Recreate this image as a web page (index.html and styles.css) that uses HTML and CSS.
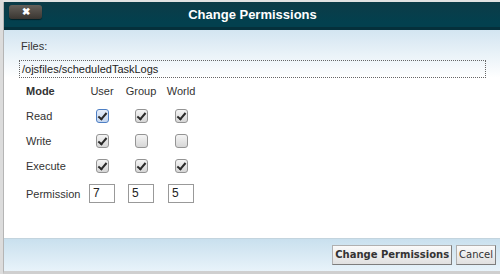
FILE: index.html
```html
<!DOCTYPE html>
<html lang="en">
<head>
  <meta charset="UTF-8">
  <title>Change Permissions</title>
  <link rel="stylesheet" href="styles.css">
</head>
<body>

<div class="page-edge"></div>

<!-- Dialog -->
<div class="dialog">
  <div class="titlebar">
    <span class="close-btn">&#10006;</span>
    <h1>Change Permissions</h1>
  </div>

  <div class="dialog-body">
    <div class="label">Files:</div>
    <div class="path-field">/ojsfiles/scheduledTaskLogs</div>

    <div class="perm-grid">
      <div class="head mode">Mode</div>
      <div class="head">User</div>
      <div class="head">Group</div>
      <div class="head">World</div>

      <div class="row-label">Read</div>
      <div class="cell"><span class="cb checked focus"></span></div>
      <div class="cell"><span class="cb checked"></span></div>
      <div class="cell"><span class="cb checked"></span></div>

      <div class="row-label">Write</div>
      <div class="cell"><span class="cb checked"></span></div>
      <div class="cell"><span class="cb"></span></div>
      <div class="cell"><span class="cb"></span></div>

      <div class="row-label">Execute</div>
      <div class="cell"><span class="cb checked"></span></div>
      <div class="cell"><span class="cb checked"></span></div>
      <div class="cell"><span class="cb checked"></span></div>

      <div class="row-label perm">Permission</div>
      <div class="cell perm"><span class="num">7</span></div>
      <div class="cell perm"><span class="num">5</span></div>
      <div class="cell perm"><span class="num">5</span></div>
    </div>
  </div>

  <div class="dialog-footer">
    <button class="btn primary">Change Permissions</button>
    <button class="btn">Cancel</button>
  </div>
</div>

</body>
</html>
```

FILE: styles.css
```css
* { margin: 0; padding: 0; box-sizing: border-box; }
html, body {
  width: 100%;
  height: 100%;
  overflow: hidden;
}
body {
  display: flex;
  background: #e2e2e2;
  font-family: "Liberation Sans", Arial, sans-serif;
  font-size: 11px;
  color: #333;
}
.page-edge {
  width: 3px;
  background: #dcdcdc;
}
.dialog {
  flex: 1;
  display: flex;
  flex-direction: column;
  margin-top: 2px;
  border-left: 1px solid #b5b5b5;
  border-bottom: 3px solid #cfcfcf;
  background: #fff;
}
.titlebar {
  height: 28px;
  display: flex;
  align-items: center;
  justify-content: center;
  position: relative;
  background: linear-gradient(#0c3b47, #03404e 80%);
  border-bottom: 3px solid #05303b;
}
.titlebar h1 {
  font-size: 13px;
  font-weight: bold;
  color: #fff;
  margin-left: 1px;
}
.close-btn {
  position: absolute;
  left: 5px;
  top: 3px;
  width: 33px;
  height: 14px;
  border-radius: 3px;
  background: linear-gradient(#65605a, #3a3631);
  box-shadow: 0 1px 1px rgba(0,0,0,0.5);
  color: #fff;
  font-size: 10px;
  font-weight: bold;
  text-align: center;
  line-height: 14px;
}
.dialog-body {
  flex: 1;
  padding: 10px 14px 0 15px;
  background: linear-gradient(#d3e5f1, #ffffff 48px);
}
.label {
  line-height: 13px;
  margin-left: 2px;
}
.path-field {
  height: 18px;
  margin-top: 7px;
  padding-left: 2px;
  border: 1px dotted #666;
  line-height: 16px;
  color: #222;
}
.perm-grid {
  display: grid;
  grid-template-columns: 58px 36px 42px 38px;
  grid-template-rows: 24px 25px 25px 25px 30px;
  margin: 1px 0 0 7px;
  align-items: center;
}
.head {
  text-align: center;
}
.head.mode {
  text-align: left;
  font-weight: bold;
}
.row-label.perm {
  padding-top: 2px;
}
.cell {
  display: flex;
  justify-content: center;
}
.cb {
  width: 13px;
  height: 14px;
  border: 1px solid #949494;
  border-radius: 3px;
  background: linear-gradient(#f4f4f4, #d6d6d6);
  position: relative;
}
.cb.checked::after {
  content: "";
  position: absolute;
  left: 3px;
  top: 1px;
  width: 3px;
  height: 7px;
  border: solid #2a2a2a;
  border-width: 0 2px 2px 0;
  transform: rotate(40deg);
}
.cb.focus {
  border-color: #4e7fc4;
  background: linear-gradient(#e6eefa, #c4d6ef);
}
.num {
  width: 26px;
  height: 19px;
  border: 1px solid #999;
  background: #fff;
  padding-left: 3px;
  font-size: 12px;
  line-height: 17px;
  color: #222;
}
.dialog-footer {
  height: 33px;
  display: flex;
  justify-content: flex-end;
  align-items: center;
  gap: 4px;
  padding: 0 4px 1px 0;
  border-top: 1px solid #c3d4de;
  background: linear-gradient(#c9e0ee, #e8f3fa);
}
.btn {
  height: 20px;
  padding: 0 2px;
  font-family: "DejaVu Sans", Verdana, sans-serif;
  font-size: 10px;
  color: #333;
  background: linear-gradient(#fafafa, #e0e0e0);
  border: 1px solid #b0b0b0;
  border-right-color: #7d7d7d;
  border-bottom-color: #7d7d7d;
}
.btn.primary {
  font-weight: bold;
}
```
